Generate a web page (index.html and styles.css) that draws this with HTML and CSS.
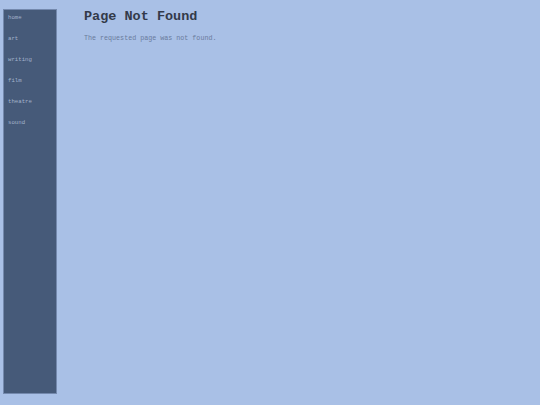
FILE: index.html
```html
<!DOCTYPE html>
<html>
<head>
<meta charset="utf-8">
<link rel="stylesheet" href="styles.css">
</head>
<body>
<div class="page">
  <nav class="sidebar">
    <a class="nav-item" href="#">home</a>
    <a class="nav-item" href="#">art</a>
    <a class="nav-item" href="#">writing</a>
    <a class="nav-item" href="#">film</a>
    <a class="nav-item" href="#">theatre</a>
    <a class="nav-item" href="#">sound</a>
  </nav>
  <main class="content">
    <h1 class="title">Page Not Found</h1>
    <p class="message">The requested page was not found.</p>
  </main>
</div>
</body>
</html>
```
FILE: styles.css
```css
html, body {
  margin: 0;
  padding: 0;
  background: #a9c0e6;
  font-family: "Courier New", "Nimbus Mono PS", "FreeMono", "Liberation Mono", monospace;
}
.page {
  display: flex;
  align-items: flex-start;
  padding: 9px 0 0 3px;
}
.sidebar {
  width: 52px;
  height: 379px;
  background: #465a79;
  border: 1px solid #7489ad;
  display: flex;
  flex-direction: column;
  padding-top: 4px;
  box-sizing: content-box;
}
.nav-item {
  display: block;
  height: 21px;
  line-height: 8px;
  padding-left: 4px;
  font-size: 5.7px;
  color: #a3b3cc;
  text-decoration: none;
}
.content {
  margin-left: 27px;
}
.title {
  margin: 0;
  padding-top: 1px;
  font-size: 13.5px;
  line-height: 14px;
  font-weight: bold;
  color: #333a4a;
}
.message {
  margin: 10px 0 0 0;
  font-size: 6.7px;
  line-height: 8px;
  color: #6a7b9c;
}
```
